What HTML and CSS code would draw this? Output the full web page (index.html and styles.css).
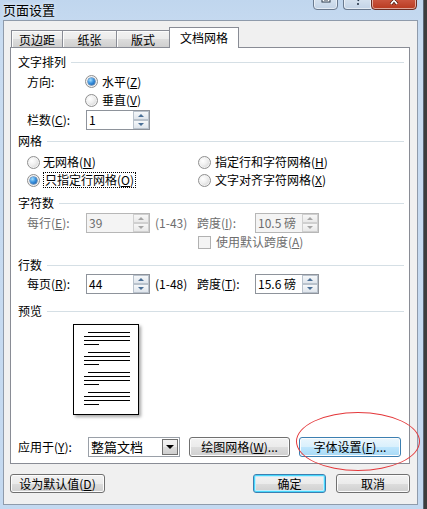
FILE: index.html
```html
<!DOCTYPE html>
<html lang="zh">
<head>
<meta charset="utf-8">
<link rel="stylesheet" href="styles.css">
</head>
<body>
<div class="window">
  <div class="titlebar">
    <span class="title">页面设置</span>
    <div class="caption-btns">
      <div class="cbtn restore"><svg width="12" height="10" viewBox="0 0 12 10"><rect x="2" y="-4" width="8" height="8" fill="#fff" stroke="#2b3a4d"/><path d="M4 0 H8 M4 2 H8" stroke="#2b3a4d"/></svg></div>
      <div class="cbtn help"><svg width="10" height="10" viewBox="0 0 10 10"><path d="M3 -2 Q7 -2 6 1 L5 3 M5 5 V7" stroke="#2b3a4d" stroke-width="1.6" fill="none"/></svg></div>
      <div class="cbtn close"><svg width="14" height="10" viewBox="0 0 14 10"><path d="M2 -4 L10 6 M12 -4 L4 6" stroke="#4a1b10" stroke-width="3.2"/><path d="M2 -4 L10 6 M12 -4 L4 6" stroke="#fff" stroke-width="1.8"/></svg></div>
    </div>
  </div>
  <div class="client">
    <div class="tabs">
      <div class="tab t1">页边距</div>
      <div class="tab t2">纸张</div>
      <div class="tab t3">版式</div>
      <div class="tab t4 active">文档网格</div>
    </div>
    <div class="panel">
      <div class="header"><span>文字排列</span><i class="rule"></i></div>
      <div class="row r-dir">
        <span class="lbl">方向:</span>
        <span class="radio checked"></span><span class="rtext">水平(<u>Z</u>)</span>
      </div>
      <div class="row r-vert">
        <span class="radio"></span><span class="rtext">垂直(<u>V</u>)</span>
      </div>
      <div class="row r-cols">
        <span class="lbl">栏数(<u>C</u>):</span>
        <div class="spin"><span class="val">1</span><span class="spinbtns"><i class="up"></i><i class="down"></i></span></div>
      </div>

      <div class="header h-grid"><span>网格</span><i class="rule"></i></div>
      <div class="row r-g1">
        <div class="gcol"><span class="radio"></span><span class="rtext">无网格(<u>N</u>)</span></div>
        <div class="gcol2"><span class="radio"></span><span class="rtext">指定行和字符网格(<u>H</u>)</span></div>
      </div>
      <div class="row r-g2">
        <div class="gcol"><span class="radio checked"></span><span class="rtext focus">只指定行网格(<u>O</u>)</span></div>
        <div class="gcol2"><span class="radio"></span><span class="rtext">文字对齐字符网格(<u>X</u>)</span></div>
      </div>

      <div class="header h-chars"><span>字符数</span><i class="rule"></i></div>
      <div class="row r-num disabled">
        <span class="lbl">每行(<u>E</u>):</span>
        <div class="spin dis"><span class="val">39</span><span class="spinbtns"><i class="up"></i><i class="down"></i></span></div>
        <span class="range">(1-43)</span>
        <span class="lbl2">跨度(<u>I</u>):</span>
        <div class="spin dis"><span class="val">10.5 磅</span><span class="spinbtns"><i class="up"></i><i class="down"></i></span></div>
      </div>
      <div class="row r-check disabled">
        <span class="checkbox"></span><span class="ctext">使用默认跨度(<u>A</u>)</span>
      </div>

      <div class="header h-lines"><span>行数</span><i class="rule"></i></div>
      <div class="row r-num2">
        <span class="lbl">每页(<u>R</u>):</span>
        <div class="spin"><span class="val">44</span><span class="spinbtns"><i class="up"></i><i class="down"></i></span></div>
        <span class="range">(1-48)</span>
        <span class="lbl2">跨度(<u>T</u>):</span>
        <div class="spin"><span class="val">15.6 磅</span><span class="spinbtns"><i class="up"></i><i class="down"></i></span></div>
      </div>

      <div class="header h-prev"><span>预览</span><i class="rule"></i></div>
      <div class="preview">
        <div class="page">
          <svg width="64" height="89" viewBox="0 0 64 89">
            <g stroke="#000" stroke-width="1.2">
              <path d="M14 7.5 H56 M10 11.5 H56 M10 15.5 H56 M10 19.5 H25"/>
              <path d="M14 27.5 H56 M10 31.5 H56 M10 35.5 H56 M10 39.5 H25"/>
              <path d="M14 47.5 H56 M10 51.5 H56 M10 55.5 H56 M10 59.5 H25"/>
              <path d="M14 67.5 H56 M10 71.5 H56 M10 75.5 H56 M10 79.5 H25"/>
            </g>
          </svg>
        </div>
      </div>

      <div class="row r-apply">
        <span class="lbl3">应用于(<u>Y</u>):</span>
        <div class="combo"><span class="val">整篇文档</span><span class="dropbtn"><i></i></span></div>
        <button class="btn b-draw">绘图网格(<u>W</u>)...</button>
        <button class="btn b-font hover">字体设置(<u>F</u>)...</button>
      </div>
    </div>
    <div class="footer">
      <button class="btn b-def">设为默认值(<u>D</u>)</button>
      <button class="btn b-ok default">确定</button>
      <button class="btn b-cancel">取消</button>
    </div>
  </div>
  <div class="annot"></div>
</div>
</body>
</html>
```

FILE: styles.css
```css
* { box-sizing: border-box; }
html, body { margin: 0; padding: 0; }
body {
  width: 427px;
  height: 509px;
  overflow: hidden;
  background: #3d3d3d;
  font-family: "Noto Sans CJK SC", "Noto Sans", sans-serif;
  font-size: 12px;
  color: #000;
}
u { text-decoration: underline; text-underline-offset: 1px; }

.window {
  position: relative;
  width: 424px;
  height: 509px;
  background: linear-gradient(#c0d6ee, #c9dcf1 40px, #c4d9f0);
  border-right: 1px solid #5a6675;
}

.titlebar {
  height: 20px;
  display: flex;
  align-items: flex-start;
}
.title {
  margin-left: 3px;
  margin-top: 0;
  font-size: 13px;
  line-height: 19px;
  height: 19px;
  color: #000;
  text-shadow: 0 0 4px #fff;
}
.caption-btns {
  margin-left: auto;
  margin-right: 6px;
  margin-top: -9px;
  display: flex;
}
.cbtn {
  height: 19px;
  border: 1px solid #6a7a8f;
  border-radius: 0 0 4px 4px;
  display: flex;
  align-items: flex-end;
  justify-content: center;
  padding-bottom: 1px;
  box-shadow: inset 0 0 0 1px rgba(255,255,255,0.55);
}
.restore {
  width: 25px;
  background: linear-gradient(#e6eef7, #d3e0ee 50%, #c2d3e6);
}
.help {
  width: 28px;
  margin-left: 5px;
  background: linear-gradient(#e6eef7, #d3e0ee 50%, #c2d3e6);
  border-right: none;
  border-radius: 0 0 0 4px;
}
.close {
  width: 46px;
  background: linear-gradient(#e08b78, #c9533c 50%, #b8391f);
  border-color: #6b2d22;
}

.client {
  margin-left: 3px;
  width: 415px;
  height: 485px;
  background: #f0f0f0;
  border: 1px solid #8f9bab;
  padding-top: 6px;
}

.tabs {
  display: flex;
  align-items: flex-end;
  height: 20px;
  margin-left: 7px;
  position: relative;
  z-index: 2;
}
.tab {
  height: 17px;
  border: 1px solid #898c95;
  border-bottom: none;
  background: linear-gradient(#f2f2f2, #ebebeb 50%, #dddddd 50%, #cfcfcf);
  box-shadow: inset 1px 1px 0 #fcfcfc;
  display: flex;
  align-items: center;
  justify-content: center;
  line-height: 14px;
  padding-top: 1px;
}
.t1 { width: 52px; }
.t2 { width: 55px; margin-left: -1px; }
.t3 { width: 54px; margin-left: -1px; }
.t4 { width: 70px; margin-left: -1px; }
.tab.active {
  height: 21px;
  margin-bottom: -1px;
  background: #fff;
  box-shadow: none;
  padding-bottom: 2px;
}

.panel {
  margin-left: 6px;
  width: 400px;
  height: 417px;
  background: #fff;
  border: 1px solid #898c95;
  padding: 6px 5px 0 7px;
  position: relative;
  z-index: 1;
}

.header {
  display: flex;
  align-items: center;
  height: 16px;
  line-height: 16px;
}
.rule {
  flex: 1;
  height: 1px;
  margin-left: 5px;
  background: #d5dfe5;
}
.h-grid { margin-top: 3px; }
.h-chars { margin-top: 6px; }
.h-lines { margin-top: 7px; }
.h-prev { margin-top: 9px; }

.row {
  display: flex;
  align-items: center;
  line-height: 16px;
}
.lbl { margin-left: 9px; width: 58px; }
.r-dir { height: 19px; margin-top: 2px; }
.r-dir .lbl { width: 58px; }
.r-vert { height: 18px; padding-left: 67px; }
.r-cols { height: 20px; margin-top: 1px; }
.r-cols .lbl, .r-num .lbl, .r-num2 .lbl { width: 59px; }

.radio {
  flex: none;
  width: 13px;
  height: 13px;
  border-radius: 50%;
  border: 1px solid #8f8f8f;
  background: radial-gradient(circle at 35% 35%, #ffffff 0%, #f0f0f0 40%, #c8c8c8 100%);
  box-shadow: inset 0 0 0 1px #f4f4f4;
  position: relative;
}
.radio.checked::after {
  content: "";
  position: absolute;
  left: 2px;
  top: 2px;
  width: 7px;
  height: 7px;
  border-radius: 50%;
  background: radial-gradient(circle at 35% 30%, #a6e1ff 0%, #3c94e0 45%, #0d4f9e 100%);
  box-shadow: 0 0 0 0.5px #1c5a9c;
}
.rtext { margin-left: 4px; white-space: nowrap; }

.spin {
  display: flex;
  align-items: center;
  width: 64px;
  height: 20px;
  border: 1px solid #8e939b;
  background: #fff;
}
.spin .val {
  flex: 1;
  padding-left: 2px;
  line-height: 16px;
  white-space: nowrap;
}
.spinbtns {
  width: 16px;
  height: 18px;
  display: flex;
  flex-direction: column;
  margin-right: 0;
}
.spinbtns i {
  flex: 1;
  display: flex;
  align-items: center;
  justify-content: center;
  border: 1px solid #b9c2cc;
  background: linear-gradient(#f6f8fa, #dfe5ec);
  position: relative;
}
.spinbtns i::after {
  content: "";
  width: 0;
  height: 0;
  border-left: 3px solid transparent;
  border-right: 3px solid transparent;
}
.spinbtns .up::after { border-bottom: 3px solid #4a6f96; }
.spinbtns .down::after { border-top: 3px solid #4a6f96; }
.spin.dis { border-color: #b7b7b7; background: #f4f4f4; }
.spin.dis .val { color: #6d6d6d; }
.spin.dis .spinbtns i { border-color: #d0d0d0; background: linear-gradient(#f7f7f7, #e9e9e9); }
.spin.dis .up::after { border-bottom-color: #a5a5a5; }
.spin.dis .down::after { border-top-color: #a5a5a5; }

.r-g1 { height: 18px; margin-top: 4px; }
.r-g2 { height: 18px; }
.gcol { margin-left: 9px; width: 171px; display: flex; align-items: center; }
.gcol2 { display: flex; align-items: center; }
.gcol2 .rtext { margin-left: 4px; }
.gcol .rtext { margin-left: 3px; }
.focus {
  border: 1px dotted #000;
  padding: 0 1px;
  line-height: 14px;
}

.r-num { height: 20px; margin-top: 2px; }
.r-num2 { height: 20px; margin-top: 1px; }
.range { margin-left: 5px; width: 42px; white-space: nowrap; }
.lbl2 { width: 58px; white-space: nowrap; }
.disabled { color: #6d6d6d; }
.r-check { height: 16px; margin-top: 1px; padding-left: 180px; }
.checkbox {
  width: 13px;
  height: 13px;
  border: 1px solid #b1b1b1;
  background: #f4f4f4;
}
.ctext { margin-left: 5px; }

.preview {
  margin-top: 5px;
  padding-left: 55px;
  height: 91px;
}
.page {
  width: 66px;
  height: 91px;
  border: 1px solid #000;
  background: #fff;
  box-shadow: 2px 2px 3px rgba(0,0,0,0.35);
}
.page svg { display: block; }

.r-apply { height: 20px; margin-top: 22px; }
.lbl3 { width: 70px; white-space: nowrap; }
.combo {
  display: flex;
  align-items: center;
  width: 92px;
  height: 20px;
  border: 1px solid #9aa0a8;
  background: #fff;
  padding-right: 1px;
}
.combo .val { flex: 1; padding-left: 2px; font-size: 13px; line-height: 16px; }
.dropbtn {
  width: 16px;
  height: 16px;
  border: 1px solid #707070;
  background: linear-gradient(#f2f2f2, #ebebeb 50%, #dddddd 50%, #cfcfcf);
  display: flex;
  align-items: center;
  justify-content: center;
}
.dropbtn i {
  width: 0; height: 0;
  border-left: 4px solid transparent;
  border-right: 4px solid transparent;
  border-top: 4px solid #000;
}

.btn {
  font-family: inherit;
  font-size: 12px;
  color: #000;
  height: 20px;
  padding: 0;
  line-height: 16px;
  border: 1px solid #707070;
  border-radius: 3px;
  background: linear-gradient(#f2f2f2, #ebebeb 50%, #dddddd 50%, #cfcfcf);
  box-shadow: inset 0 0 0 1px #fcfcfc;
  white-space: nowrap;
}
.b-draw { width: 101px; margin-left: 9px; }
.b-font { width: 102px; margin-left: 9px; }
.btn.hover {
  border-color: #3c7fb1;
  background: linear-gradient(#eaf6fd, #d9f0fc 50%, #bee6fd 50%, #a7d9f5);
}

.footer {
  display: flex;
  margin-left: 6px;
  width: 400px;
  margin-top: 10px;
}
.footer .btn { height: 19px; }
.b-def { width: 95px; }
.b-ok { width: 73px; margin-left: auto; }
.b-cancel { width: 74px; margin-left: 10px; }
.btn.default {
  border-color: #3c7fb1;
  box-shadow: inset 0 0 0 1px #48d8fb, inset 0 0 0 2px #c2ecfc;
}

.annot {
  position: absolute;
  left: 296px;
  top: 412px;
  width: 124px;
  height: 59px;
  border: 1px solid #e4393c;
  border-radius: 50%;
  z-index: 5;
  pointer-events: none;
}
```
